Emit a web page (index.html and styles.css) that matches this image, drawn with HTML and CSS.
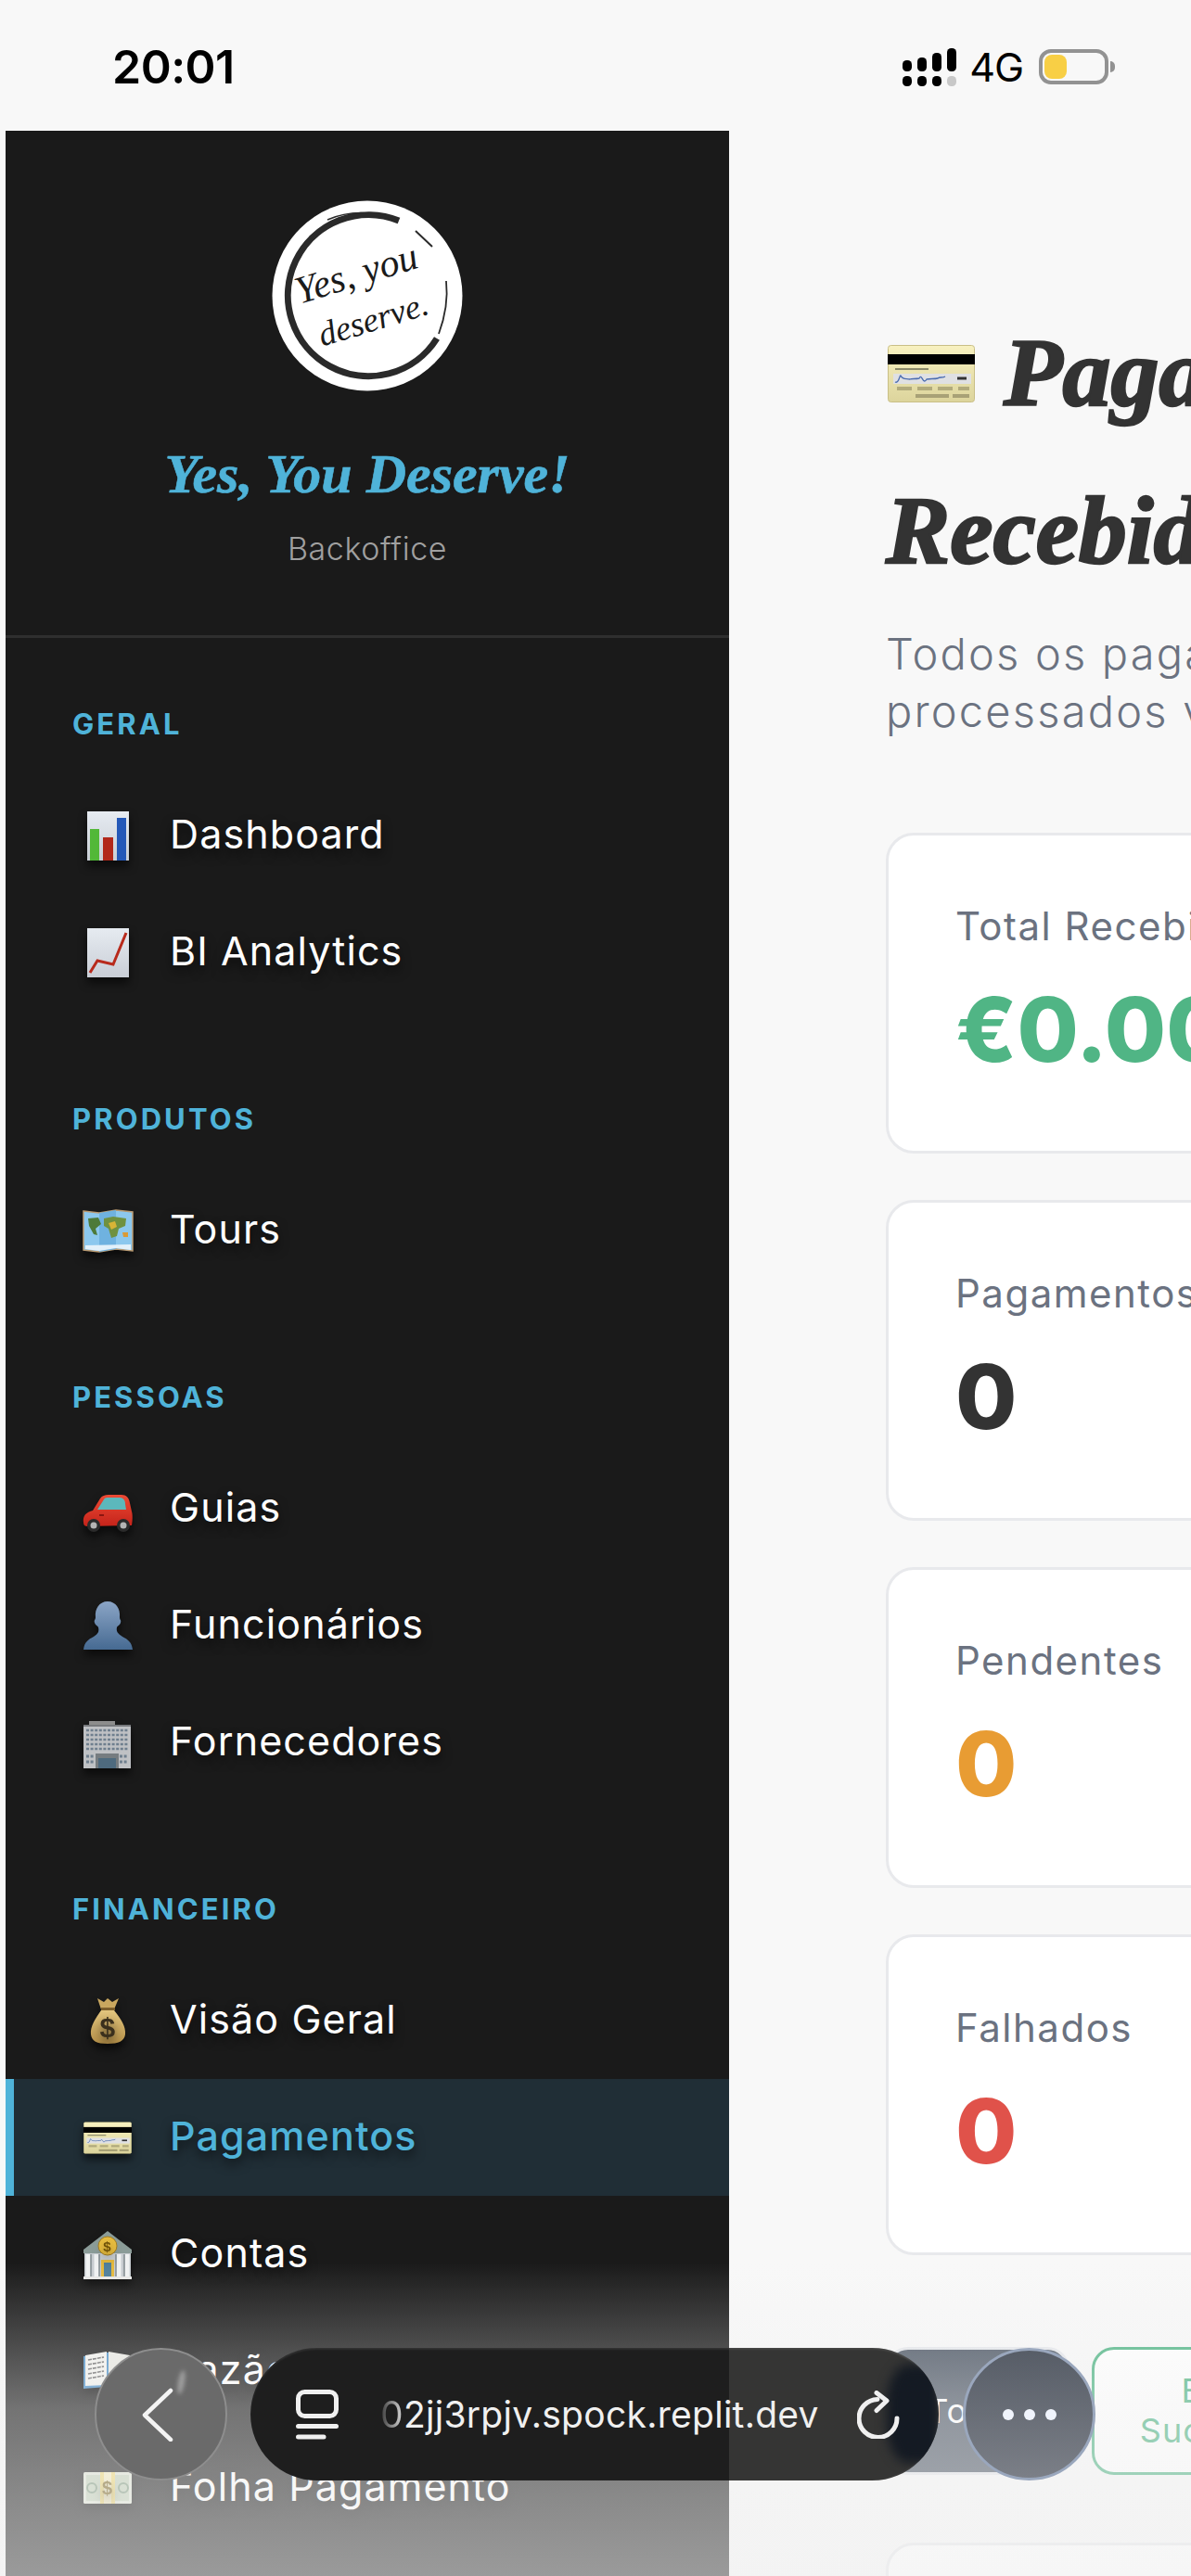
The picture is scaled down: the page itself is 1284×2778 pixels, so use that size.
FILE: index.html
```html
<!DOCTYPE html>
<html lang="pt">
<head>
<meta charset="utf-8">
<title>Pagamentos Recebidos</title>
<link rel="stylesheet" href="styles.css">
</head>
<body>
<svg class="defs" width="0" height="0" aria-hidden="true">
  <defs>
    <linearGradient id="paper" x1="0" y1="0" x2="0" y2="1"><stop offset="0" stop-color="#e6ebf1"/><stop offset="1" stop-color="#c9ced6"/></linearGradient>
    <linearGradient id="cardg" x1="0" y1="0" x2="0" y2="1"><stop offset="0" stop-color="#f8f1c0"/><stop offset="1" stop-color="#dcd49c"/></linearGradient>
    <linearGradient id="bust" x1="0" y1="0" x2="0" y2="1"><stop offset="0" stop-color="#8ba5c6"/><stop offset="1" stop-color="#466a92"/></linearGradient>
    <linearGradient id="bag" x1="0" y1="0" x2="0" y2="1"><stop offset="0" stop-color="#e3c67f"/><stop offset="1" stop-color="#b9934a"/></linearGradient>
    <linearGradient id="carbody" x1="0" y1="0" x2="0" y2="1"><stop offset="0" stop-color="#ec4a35"/><stop offset="1" stop-color="#c5231a"/></linearGradient>

    <symbol id="i-bars" viewBox="0 0 64 64">
      <rect x="10" y="6" width="45" height="53" fill="url(#paper)"/>
      <rect x="13" y="25" width="10" height="34" fill="#52b838"/>
      <rect x="27" y="34" width="11" height="25" fill="#b2271a"/>
      <rect x="42" y="13" width="10" height="46" fill="#2458b8"/>
    </symbol>
    <symbol id="i-line" viewBox="0 0 64 64">
      <rect x="10" y="6" width="45" height="53" fill="url(#paper)"/>
      <path d="M13 54 L21 41 L38 45 L52 11" fill="none" stroke="#b82a1c" stroke-width="3"/>
    </symbol>
    <symbol id="i-map" viewBox="0 0 64 64">
      <path d="M6 11 L23 13 L41 10 L59 12 L59 54 L41 52 L23 55 L6 53 Z" fill="#8cc8ee" stroke="#b99a72" stroke-width="1.5"/>
      <path d="M23 13 L41 10 L41 52 L23 55 Z" fill="#6fb2e0"/>
      <path d="M11 19 L22 18 L25 25 L19 30 L21 37 L17 36 L12 27 Z" fill="#4d7a3a"/>
      <path d="M28 19 L38 17 L52 19 L51 27 L44 30 L42 38 L36 40 L33 30 L28 27 Z" fill="#6f9140"/>
      <path d="M33 24 L40 22 L42 28 L36 31 Z" fill="#d8b436"/>
      <path d="M48 34 L54 34 L54 39 L49 39 Z" fill="#d99a36"/>
      <path d="M8 48 L57 47 L57 53 L41 51 L23 54 L8 52 Z" fill="#e3f1fa"/>
    </symbol>
    <symbol id="i-car" viewBox="0 0 64 64">
      <path d="M6 47 C5 39 9 36 16 34 L24 21 C26 18 29 17 33 17 L47 17 C52 17 55 20 56 26 L58 35 C59 38 59 44 58 50 L10 51 C8 51 6 50 6 47 Z" fill="url(#carbody)"/>
      <path d="M21 33 L28 22 C29 20 31 20 33 20 L45 20 C49 20 51 23 51 27 L52 33 Z" fill="#5cb8bc"/>
      <rect x="23" y="38" width="5" height="2" fill="#8c1610"/>
      <circle cx="17" cy="50" r="7" fill="#2b2b2b"/><circle cx="17" cy="50" r="3.500" fill="#b4b4b4"/>
      <circle cx="49" cy="50" r="7" fill="#2b2b2b"/><circle cx="49" cy="50" r="3.500" fill="#b4b4b4"/>
    </symbol>
    <symbol id="i-person" viewBox="0 0 64 64">
      <path d="M32 6 C41 6 46 14 45 23 C45 26 47 26 46 29 C45 32 43 32 42 34 C41 38 43 41 48 44 C54 47 58 50 59 58 L6 58 C7 50 11 47 17 44 C22 41 23 38 22 34 C21 32 19 32 18 29 C17 26 19 26 19 23 C18 14 23 6 32 6 Z" fill="url(#bust)"/>
    </symbol>
    <symbol id="i-office" viewBox="0 0 64 64">
      <rect x="12" y="9" width="28" height="4" fill="#8d8d8d"/>
      <rect x="6" y="13" width="51" height="47" fill="#bfc1c4"/>
      <rect x="6" y="13" width="51" height="2" fill="#77797c"/>
      <path d="M9 19h45M9 24h45M9 29h45M9 34h45M9 39h45" stroke="#6f7f8e" stroke-width="2.400" stroke-dasharray="3 1.600" fill="none"/>
      <path d="M9 47h9M45 47h9M9 53h9M45 53h9" stroke="#6f7f8e" stroke-width="3" stroke-dasharray="3 1.600" fill="none"/>
      <rect x="19" y="44" width="25" height="16" fill="#767c80"/>
      <rect x="22" y="49" width="19" height="11" fill="#4e6a7e"/>
    </symbol>
    <symbol id="i-bag" viewBox="0 0 64 64">
      <path d="M21 8 L28 12 L32 8 L37 12 L44 8 L39 20 L25 20 Z" fill="#c9a75f"/>
      <rect x="25" y="18" width="15" height="3" fill="#7d5f2c"/>
      <path d="M25 21 L39 21 C46 30 52 38 51 47 C50 54 44 57 32 57 C20 57 15 54 14 47 C13 38 19 30 25 21 Z" fill="url(#bag)"/>
      <text x="32.500" y="50" class="svg-dollar">$</text>
    </symbol>
    <symbol id="i-card" viewBox="0 0 94 62">
      <rect x="0.500" y="0.500" width="93" height="61" rx="3" fill="url(#cardg)" stroke="#c9bf86"/>
      <rect x="0" y="10" width="94" height="11" fill="#000"/>
      <rect x="6" y="31" width="84" height="11" fill="#dfe0e3"/>
      <path d="M8 26 H44" stroke="#6a6850" stroke-width="1.600"/>
      <path d="M8 40 C12 42 13 32 14 33 C16 38 20 36 24 37 C26 36 30 37 34 36 C37 30 38 44 42 37 C46 36 50 37 54 36 C56 34 59 36 62 34" fill="none" stroke="#4a6cb0" stroke-width="1.300"/>
      <path d="M75 36 H85" stroke="#333" stroke-width="3"/>
      <path d="M10 47 H88" stroke="#b1aa7c" stroke-width="4" stroke-dasharray="16 6"/>
      <path d="M30 55 H88" stroke="#a8a176" stroke-width="4" stroke-dasharray="36 4"/>
    </symbol>
    <symbol id="i-bank" viewBox="0 0 64 64">
      <path d="M32 7 L58 27 L58 31 L6 31 L6 27 Z" fill="#8b9c98"/>
      <rect x="7" y="31" width="50" height="26" fill="#c7ccd0"/>
      <path d="M11 32V56M20 32V56M44 32V56M53 32V56" stroke="#f0f2f2" stroke-width="5"/>
      <path d="M14 32V56M23 32V56M41 32V56M50 32V56" stroke="#5a666b" stroke-width="1"/>
      <rect x="25" y="38" width="14" height="19" fill="#e4b93d"/>
      <rect x="28" y="41" width="8" height="16" fill="#4f7f9b"/>
      <rect x="6" y="56" width="52" height="3" fill="#e8e8e6"/>
      <circle cx="32" cy="23" r="10" fill="#e8bd3f" stroke="#a67f1f"/>
      <text x="32" y="28.500" class="svg-coin">$</text>
    </symbol>
    <symbol id="i-book" viewBox="0 0 64 64">
      <path d="M6 16 L31 12 L33 12 L58 16 L58 51 L33 49 L31 49 L6 51 Z" fill="#4b8fc6"/>
      <path d="M8 15 L31 11 L31 47 L8 48 Z" fill="#f2f2ee"/>
      <path d="M33 11 L56 15 L56 48 L33 47 Z" fill="#e8e8e2"/>
      <path d="M11 20 L28 17M11 25 L28 22M11 30 L28 27M11 35 L28 32M11 40 L28 37" stroke="#6b6b6b" stroke-width="1.600" stroke-dasharray="4 1"/>
    </symbol>
    <symbol id="i-money" viewBox="0 0 64 64">
      <rect x="6" y="15" width="52" height="34" rx="1.500" fill="#dfe5d5"/>
      <rect x="9" y="18" width="46" height="28" fill="#c2d0b8"/>
      <circle cx="15" cy="32" r="5" fill="none" stroke="#7f9a80" stroke-width="2"/>
      <circle cx="49" cy="32" r="5" fill="none" stroke="#7f9a80" stroke-width="2"/>
      <rect x="24" y="15" width="16" height="34" fill="#f0d977"/>
      <rect x="28" y="15" width="8" height="34" fill="#f7eec0"/>
      <text x="32" y="39" class="svg-bill">$</text>
    </symbol>
  </defs>
</svg>

<div class="screen">
  <div class="statusbar">
    <span class="clock">20:01</span>
    <div class="status-right">
      <svg class="signal" width="58" height="41" viewBox="0 0 58 41">
        <rect x="0" y="13" width="10" height="12" rx="4.500" fill="#000"/>
        <rect x="16" y="10" width="10" height="15" rx="4.500" fill="#000"/>
        <rect x="32" y="5" width="10" height="20" rx="4.500" fill="#000"/>
        <rect x="48" y="0" width="10" height="25" rx="4.500" fill="#000"/>
        <rect x="0" y="30" width="10" height="11" rx="4.500" fill="#000"/>
        <rect x="16" y="30" width="10" height="11" rx="4.500" fill="#000"/>
        <rect x="32" y="30" width="10" height="11" rx="4.500" fill="#000"/>
        <rect x="48" y="30" width="10" height="11" rx="4.500" fill="#c8c8c8"/>
      </svg>
      <span class="net">4G</span>
      <div class="battery"><div class="battery-level"></div></div>
      <div class="battery-nub"></div>
    </div>
  </div>

  <div class="layout">
    <aside class="sidebar">
      <header class="brand">
        <svg class="logo" width="206" height="206" viewBox="0 0 206 206" role="img" aria-label="Yes, you deserve.">
          <circle cx="103" cy="103" r="102.500" fill="#fff"/>
          <path d="M137 22 A87 87 0 1 0 178 149" fill="none" stroke="#2a2a2a" stroke-width="7"/>
          <path d="M60 21 A92 92 0 0 1 105 14" fill="none" stroke="#2a2a2a" stroke-width="1.500"/>
          <path d="M155 33 L173 50" fill="none" stroke="#2a2a2a" stroke-width="2"/>
          <path d="M188 87 C190 105 187 125 180 144" fill="none" stroke="#2a2a2a" stroke-width="1.800"/>
          <text class="logo-line1" x="95" y="92" transform="rotate(-17 95 92)">Yes, you</text>
          <text class="logo-line2" x="113" y="140" transform="rotate(-17 113 140)">deserve.</text>
        </svg>
        <h2 class="brand-name">Yes, You Deserve!</h2>
        <p class="brand-sub">Backoffice</p>
      </header>

      <nav class="nav">
        <section class="nav-section">
          <h3 class="nav-title">GERAL</h3>
          <a class="nav-item"><svg class="icon"><use href="#i-bars"/></svg><span>Dashboard</span></a>
          <a class="nav-item"><svg class="icon"><use href="#i-line"/></svg><span>BI Analytics</span></a>
        </section>
        <section class="nav-section">
          <h3 class="nav-title">PRODUTOS</h3>
          <a class="nav-item"><svg class="icon"><use href="#i-map"/></svg><span>Tours</span></a>
        </section>
        <section class="nav-section">
          <h3 class="nav-title">PESSOAS</h3>
          <a class="nav-item"><svg class="icon"><use href="#i-car"/></svg><span>Guias</span></a>
          <a class="nav-item"><svg class="icon"><use href="#i-person"/></svg><span>Funcionários</span></a>
          <a class="nav-item"><svg class="icon"><use href="#i-office"/></svg><span>Fornecedores</span></a>
        </section>
        <section class="nav-section">
          <h3 class="nav-title">FINANCEIRO</h3>
          <a class="nav-item"><svg class="icon"><use href="#i-bag"/></svg><span>Visão Geral</span></a>
          <a class="nav-item active"><svg class="icon icon-card"><use href="#i-card"/></svg><span>Pagamentos</span></a>
          <a class="nav-item"><svg class="icon"><use href="#i-bank"/></svg><span>Contas</span></a>
          <a class="nav-item"><svg class="icon"><use href="#i-book"/></svg><span>Razão</span></a>
          <a class="nav-item"><svg class="icon"><use href="#i-money"/></svg><span>Folha Pagamento</span></a>
        </section>
      </nav>
    </aside>

    <main class="main">
      <h1 class="title"><svg class="title-icon"><use href="#i-card"/></svg>Pagamentos<br>Recebidos</h1>
      <p class="subtitle">Todos os pagamentos<br>processados via Stripe</p>

      <div class="stats">
        <div class="stat"><div class="stat-label">Total Recebido</div><div class="stat-value green">€0.00</div></div>
        <div class="stat"><div class="stat-label">Pagamentos Confirmados</div><div class="stat-value">0</div></div>
        <div class="stat"><div class="stat-label">Pendentes</div><div class="stat-value orange">0</div></div>
        <div class="stat"><div class="stat-label">Falhados</div><div class="stat-value red">0</div></div>
      </div>

      <div class="filters">
        <button class="filter filter-all">Todos</button>
        <button class="filter filter-ok">Bem<br>Sucedido</button>
      </div>

      <div class="table-card"></div>
    </main>
  </div>

  <div class="fade"></div>

  <div class="browserbar">
    <button class="round back" aria-label="Voltar">
      <svg width="34" height="58" viewBox="0 0 34 58"><path d="M31 3 L3 29.500 L31 56" fill="none" stroke="#f4f4f4" stroke-width="4.500" stroke-linecap="round" stroke-linejoin="round"/></svg>
    </button>
    <div class="urlpill">
      <svg class="tabs" width="46" height="54" viewBox="0 0 46 54">
        <rect x="2.500" y="2.500" width="41" height="26" rx="7" fill="none" stroke="#f0f0f0" stroke-width="5"/>
        <path d="M2.500 39.500 H43.500" stroke="#f0f0f0" stroke-width="5" stroke-linecap="round"/>
        <path d="M2.500 51 H30" stroke="#f0f0f0" stroke-width="5" stroke-linecap="round"/>
      </svg>
      <span class="url"><span class="url-fade">0</span>2jj3rpjv.spock.replit.dev</span>
      <svg class="reload" width="46" height="52" viewBox="0 0 46 52">
        <path d="M43 30 A20.500 20.500 0 1 1 22 9.500" fill="none" stroke="#f0f0f0" stroke-width="5" stroke-linecap="round"/>
        <path d="M21 2.500 L32 11 L21 21.500" fill="none" stroke="#f0f0f0" stroke-width="5" stroke-linecap="round" stroke-linejoin="round"/>
      </svg>
    </div>
    <button class="round more" aria-label="Mais">
      <span class="dot"></span><span class="dot"></span><span class="dot"></span>
    </button>
  </div>
</div>
</body>
</html>
```

FILE: styles.css
```css
* { box-sizing: border-box; }
html, body { margin: 0; padding: 0; background: #f8f8f8; }
body { font-family: Inter, "Noto Sans", sans-serif; }
.defs { display: block; width: 0; height: 0; }

.screen { position: relative; width: 1284px; height: 2778px; overflow: hidden; background: #f8f8f8; }

/* status bar */
.statusbar { height: 141px; display: flex; justify-content: space-between; padding: 52px 82px 0 121px; }
.clock { font-family: Inter, sans-serif; font-weight: 600; font-size: 50px; line-height: 41px; color: #000; letter-spacing: -0.5px; }
.status-right { display: flex; align-items: flex-start; height: 41px; }
.signal { display: block; }
.net { font-size: 43px; font-weight: 400; line-height: 41px; margin-left: 14px; color: #000; letter-spacing: -1px; }
.battery { width: 75px; height: 38px; margin: 1px 0 0 17px; border: 4px solid #929292; border-radius: 13px; padding: 2px; }
.battery-level { width: 24px; height: 26px; border-radius: 8px; background: #f8cf45; }
.battery-nub { width: 5px; height: 12px; margin: 14px 0 0 2px; background: #929292; border-radius: 0 6px 6px 0; }

/* layout */
.layout { display: flex; padding-left: 6px; align-items: flex-start; }
.sidebar { flex: none; width: 780px; height: 2637px; background: #1a1a1a; color: #fff; overflow: hidden; }

.brand { display: flex; flex-direction: column; align-items: center; padding: 75px 0 73px; border-bottom: 3px solid #2f2f2f; }
.logo { display: block; }
.brand-name { margin: 54px 0 0; font-family: "Liberation Serif", serif; font-style: italic; font-weight: 700; font-size: 60px; line-height: 70px; color: #4fb3d9; -webkit-text-stroke: 0.6px #4fb3d9; }
.brand-sub { margin: 26px 0 0; font-size: 34px; line-height: 40px; font-weight: 300; color: #a0a0a0; letter-spacing: 0.6px; }

.nav { padding-top: 75px; }
.nav-section { margin-bottom: 99px; }
.nav-title { margin: 0 0 39px; padding-left: 72px; font-size: 31px; line-height: 36px; font-weight: 700; letter-spacing: 3.1px; color: #4fb3d9; }
.nav-item { display: flex; align-items: center; gap: 35px; height: 126px; padding-left: 69px; border-left: 9px solid transparent; font-size: 43px; letter-spacing: 1.1px; color: #fff; text-shadow: 0 6px 12px rgba(0, 0, 0, 0.6); }
.nav-item span { padding-bottom: 4px; }
.nav-item.active { background: #202e36; border-left-color: #4fb3d9; color: #4fb3d9; font-weight: 500; }
.icon { flex: none; width: 64px; height: 64px; filter: drop-shadow(0 6px 5px rgba(0, 0, 0, 0.6)); }
.icon-card { padding: 15px 6px 14px; }

.svg-dollar { font: 700 30px "Liberation Sans", sans-serif; text-anchor: middle; fill: #3a2f1c; }
.svg-coin { font: 700 15px "Liberation Sans", sans-serif; text-anchor: middle; fill: #6f5208; }
.svg-bill { font: 700 20px "Liberation Sans", sans-serif; text-anchor: middle; fill: #7a6420; }
.logo-line1 { font: italic 400 42px "Liberation Serif", serif; text-anchor: middle; fill: #1a1a1a; }
.logo-line2 { font: italic 400 37px "Liberation Serif", serif; text-anchor: middle; fill: #1a1a1a; }

/* main */
.main { flex: none; width: 1180px; padding: 176px 0 0 169px; white-space: nowrap; }
.title { margin: 0; font-family: "Liberation Serif", serif; font-style: italic; font-weight: 700; font-size: 104px; line-height: 170px; color: #333; -webkit-text-stroke: 2.5px #333; }
.title-icon { display: inline-block; width: 94px; height: 62px; margin-right: 31px; margin-left: 2px; vertical-align: 3px; }
.subtitle { margin: 17px 0 0; font-size: 47px; line-height: 62px; font-weight: 300; letter-spacing: 2.2px; color: #6b7280; }

.stats { display: flex; flex-direction: column; gap: 50px; margin-top: 100px; }
.stat { height: 346px; padding: 71px 0 0 72px; background: #fff; border: 3px solid #e8e9ec; border-radius: 30px; }
.stat-label { font-size: 42px; line-height: 54px; letter-spacing: 1.5px; color: #6b7280; }
.stat-value { margin-top: 29px; font-size: 96px; line-height: 110px; font-weight: 800; color: #333; }
.green { color: #50b585; }
.orange { color: #e89c33; }
.red { color: #e0524a; }

.filters { display: flex; gap: 24px; margin-top: 99px; }
.filter { height: 138px; border-radius: 24px; font: 400 36px/43px Inter, sans-serif; letter-spacing: 1px; padding: 0; }
.filter-all { width: 198px; background: #4b5563; border: 3px solid #e5e7eb; color: #fff; }
.filter-ok { width: 272px; background: #fff; border: 3px solid #50b585; color: #50b585; }

.table-card { height: 300px; margin-top: 73px; background: #fff; border: 3px solid #e8e9ec; border-radius: 30px; }

/* bottom fade */
.fade { position: absolute; left: 0; right: 0; bottom: 0; height: 338px; pointer-events: none;
  background: linear-gradient(to bottom, rgba(240, 240, 240, 0) 0%, rgba(240, 240, 240, 0.16) 18%, rgba(240, 240, 240, 0.42) 47%, rgba(240, 240, 240, 0.53) 77%, rgba(240, 240, 240, 0.6) 100%); }

/* browser controls */
.browserbar { position: absolute; left: 102px; bottom: 103px; display: flex; align-items: center; gap: 25px; }
.round { flex: none; width: 143px; height: 143px; border-radius: 50%; padding: 0; display: flex; align-items: center; justify-content: center; }
.back { position: relative; background: #6a6a6a; border: 2px solid #8e8e8e; }
.back::after { content: ""; position: absolute; left: 88px; top: 22px; width: 7px; height: 26px; border-radius: 50%; background: rgba(255, 255, 255, 0.35); filter: blur(2px); transform: rotate(10deg); }
.back svg { margin-right: 8px; }
.urlpill { position: relative; flex: none; width: 742px; height: 143px; border-radius: 72px; display: flex; align-items: center; padding: 0 42px 0 49px; overflow: hidden;
  background: linear-gradient(to right, #1e1e1e 516px, #353534 516px); box-shadow: inset 0 2px 2px rgba(255, 255, 255, 0.08), inset -2px 0 2px rgba(255, 255, 255, 0.08); }
.urlpill::after { content: ""; position: absolute; right: 0; top: 18px; width: 56px; height: 106px; background: #141a23; border-radius: 40% 0 0 40%; filter: blur(6px); }
.tabs, .reload { position: relative; z-index: 1; flex: none; }
.url { position: relative; z-index: 1; margin-left: 45px; font-size: 39px; color: #f0f0f0; letter-spacing: 0.28px; white-space: nowrap; }
.url-fade { background: linear-gradient(to right, #3a3a3a, #dddddd); -webkit-background-clip: text; background-clip: text; color: transparent; }
.reload { margin-left: auto; }
.more { position: relative; gap: 11px; margin-left: 1px; overflow: hidden; background: linear-gradient(to bottom, #575d67, #7b7f87); border: 3px solid #9aa7bd; }
.dot { position: relative; width: 12px; height: 12px; border-radius: 50%; background: #f0f4fc; }
```
